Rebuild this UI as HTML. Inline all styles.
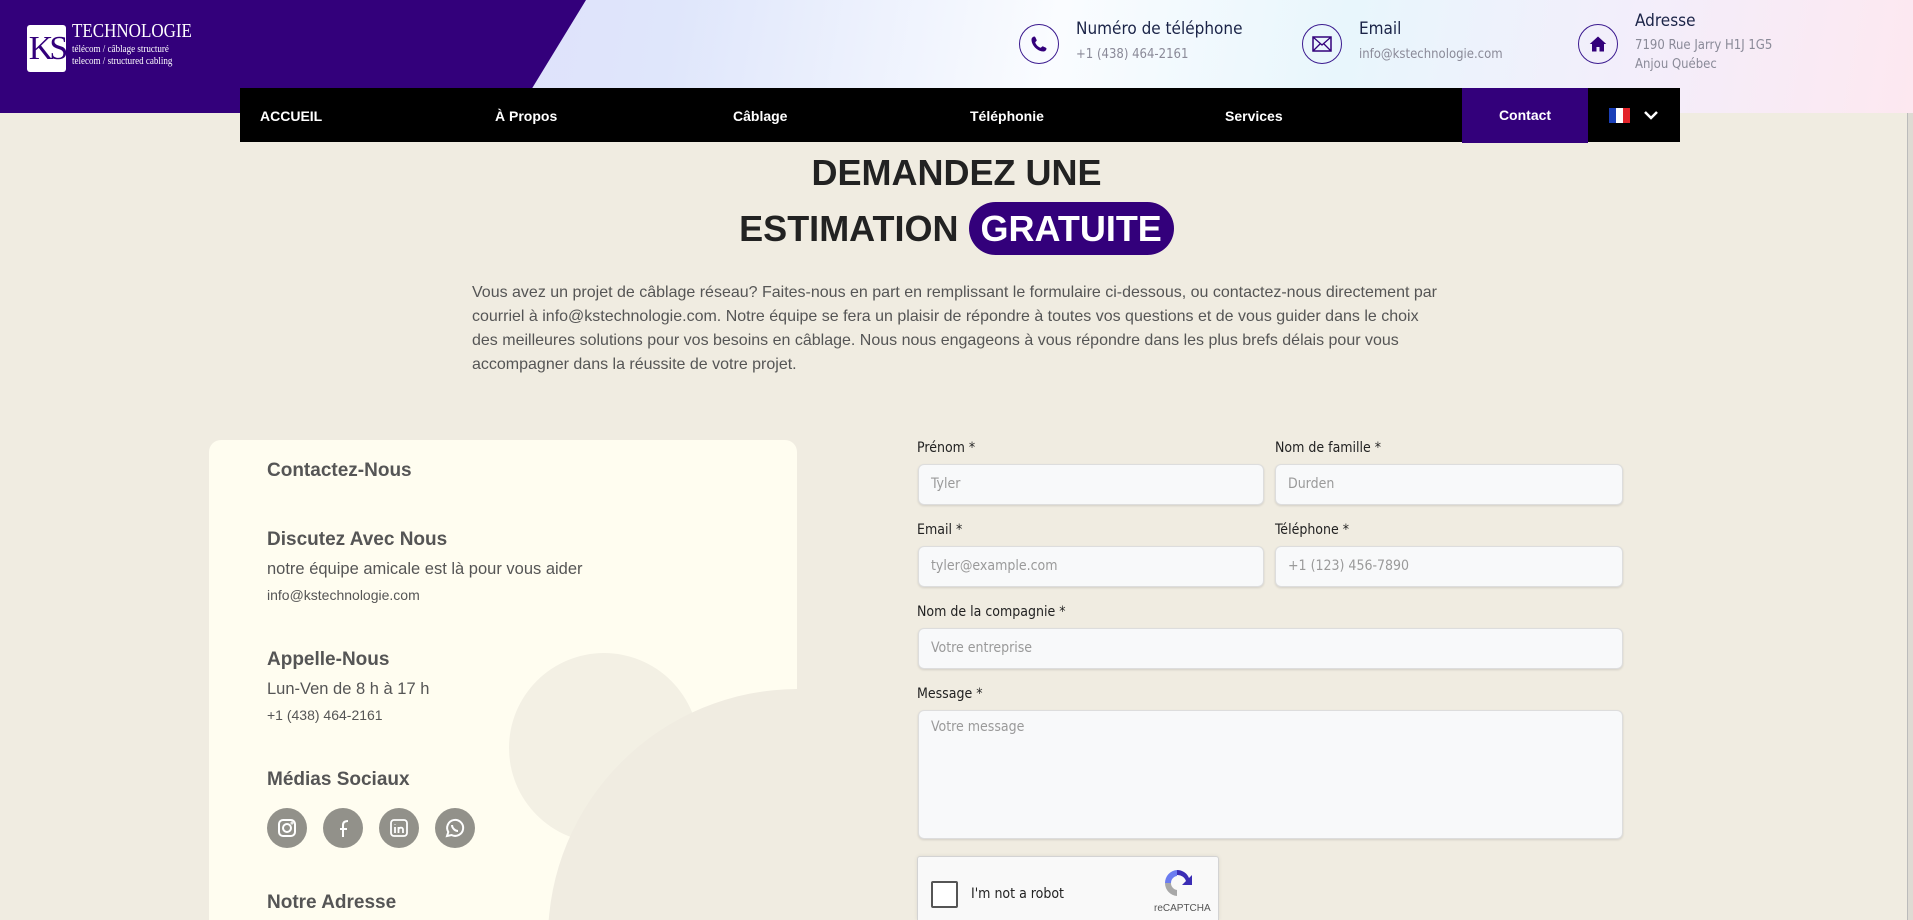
<!DOCTYPE html>
<html><head><meta charset="utf-8"><style>
*{box-sizing:border-box;margin:0;padding:0}
html,body{width:1913px;height:920px;overflow:hidden}
body{background:#f0ece1;font-family:"Liberation Sans",sans-serif;position:relative}
.abs{position:absolute}
#hdr{left:0;top:0;width:1913px;height:113px;background:linear-gradient(100deg,#ddd3fb 0%,#dfe6fb 35%,#fafcff 55%,#e8f6fc 70%,#f3eefb 85%,#fde8f0 100%)}
#purple{left:0;top:0;width:590px;height:113px;background:#33007b;clip-path:polygon(0 0,586px 0,517px 113px,0 113px)}
.ic{width:40px;height:40px;border:1.5px solid #3b1a8f;border-radius:50%;display:flex;align-items:center;justify-content:center}
.ht{font-size:17px;color:#1b2448;font-family:"DejaVu Sans Condensed","Liberation Sans",sans-serif}
.hs{font-size:13px;color:#8a8a98;font-family:"DejaVu Sans Condensed","Liberation Sans",sans-serif}
#nav{left:240px;top:88px;width:1440px;height:54px;background:#000}
.ni{position:absolute;top:1px;line-height:54px;color:#fff;font-weight:bold;font-size:14px}
h1{position:absolute;left:0;width:1913px;text-align:center;font-size:36px;font-weight:bold;color:#222}
.pill{display:inline-block;background:#33007b;color:#fff;border-radius:27px;padding:0 12px;line-height:53px}
#para{left:472px;top:281px;width:975px;font-size:16px;line-height:24px;color:#555}
#card{left:209px;top:440px;width:588px;height:480px;background:#fffdf0;border-radius:12px 12px 0 0;overflow:hidden}
.ct{position:absolute;left:58px;font-weight:bold;font-size:19px;color:#555}
.cs{position:absolute;left:58px;font-size:16.5px;color:#555}
.cx{position:absolute;left:58px;font-size:14px;color:#555}
.so{position:absolute;top:368px;width:40px;height:40px;border-radius:50%;background:#92918a;display:flex;align-items:center;justify-content:center}
.lb{position:absolute;font-size:14px;color:#222;font-family:"DejaVu Sans Condensed","Liberation Sans",sans-serif}
.in{position:absolute;background:#f8f9fa;border:1px solid #ddd;border-radius:6px;box-shadow:0 1px 2px rgba(0,0,0,.12);font-size:14px;color:#9a9a9a;padding-left:12px;font-family:"DejaVu Sans Condensed","Liberation Sans",sans-serif}
</style></head><body>
<div id="hdr" class="abs"></div>
<div id="purple" class="abs"></div>
<div class="abs" style="left:27px;top:25px;width:39px;height:47px;background:#fff;border-radius:3px;color:#33007b;font-family:'Liberation Serif',serif;font-size:34px;line-height:47px;text-align:center;letter-spacing:-4px">KS</div>
<div class="abs" style="left:72px;top:20px;color:#fff;font-family:'Liberation Serif',serif;font-size:20px;transform:scaleX(.85);transform-origin:left">TECHNOLOGIE</div>
<div class="abs" style="left:72px;top:43px;color:#fff;font-family:'Liberation Serif',serif;font-size:11px;line-height:12px;transform:scaleX(.82);transform-origin:left">télécom / câblage structuré<br>telecom / structured cabling</div>

<div class="abs ic" style="left:1019px;top:24px"><svg width="18" height="18" viewBox="0 0 24 24"><path d="M6 2c1 0 2 3 3 5 0 1-2 2-2 3 1 3 4 6 7 7 1 0 2-2 3-2 2 1 5 2 5 3 0 2-2 4-4 4C10 22 2 14 2 6c0-2 2-4 4-4z" fill="#33007b"/></svg></div>
<div class="abs ht" style="left:1076px;top:19px">Numéro de téléphone</div>
<div class="abs hs" style="left:1076px;top:47px">+1 (438) 464-2161</div>
<div class="abs ic" style="left:1302px;top:24px"><svg width="20" height="16" viewBox="0 0 20 16"><rect x="1" y="1" width="18" height="14" fill="none" stroke="#33007b" stroke-width="1.5"/><path d="M1 1l9 8 9-8M1 15l7-7M19 15l-7-7" fill="none" stroke="#33007b" stroke-width="1.3"/></svg></div>
<div class="abs ht" style="left:1359px;top:19px">Email</div>
<div class="abs hs" style="left:1359px;top:47px">info@kstechnologie.com</div>
<div class="abs ic" style="left:1578px;top:24px"><svg width="18" height="18" viewBox="0 0 24 24"><path d="M12 2L1 12h3v10h6v-6h4v6h6V12h3z" fill="#33007b"/></svg></div>
<div class="abs ht" style="left:1635px;top:11px">Adresse</div>
<div class="abs hs" style="left:1635px;top:36px;line-height:19px">7190 Rue Jarry H1J 1G5<br>Anjou Québec</div>

<div id="nav" class="abs">
<div class="ni" style="left:20px">ACCUEIL</div>
<div class="ni" style="left:255px">À Propos</div>
<div class="ni" style="left:493px">Câblage</div>
<div class="ni" style="left:730px">Téléphonie</div>
<div class="ni" style="left:985px">Services</div>
<div class="ni" style="left:1222px;width:126px;top:0;background:#33007b;text-align:center;line-height:55px">Contact</div>
<div class="abs" style="left:1369px;top:20px;width:21px;height:15px;background:linear-gradient(90deg,#1a3fb8 33%,#fff 33% 66%,#e3242b 66%)"></div>
<svg class="abs" style="left:1403px;top:20px" width="16" height="14" viewBox="0 0 16 14"><path d="M2 4l6 6 6-6" fill="none" stroke="#fff" stroke-width="2.5"/></svg>
</div>
<div class="abs" style="left:1907px;top:113px;width:6px;height:807px;background:#dedbd3;border-left:1px solid #bbb"></div>

<h1 style="top:152px">DEMANDEZ UNE</h1>
<h1 style="top:202px">ESTIMATION <span class="pill">GRATUITE</span></h1>
<div id="para" class="abs">Vous avez un projet de câblage réseau? Faites-nous en part en remplissant le formulaire ci-dessous, ou contactez-nous directement par courriel à info@kstechnologie.com. Notre équipe se fera un plaisir de répondre à toutes vos questions et de vous guider dans le choix des meilleures solutions pour vos besoins en câblage. Nous nous engageons à vous répondre dans les plus brefs délais pour vous accompagner dans la réussite de votre projet.</div>

<div id="card" class="abs">
<div class="abs" style="left:300px;top:213px;width:190px;height:190px;border-radius:50%;background:#f3f0e4"></div>
<div class="abs" style="left:339px;top:249px;width:500px;height:500px;border-radius:50%;background:#f0ece1"></div>
<div class="ct" style="top:20px">Contactez-Nous</div>
<div class="ct" style="top:89px">Discutez Avec Nous</div>
<div class="cs" style="top:120px">notre équipe amicale est là pour vous aider</div>
<div class="cx" style="top:147px">info@kstechnologie.com</div>
<div class="ct" style="top:209px">Appelle-Nous</div>
<div class="cs" style="top:240px">Lun-Ven de 8 h à 17 h</div>
<div class="cx" style="top:267px">+1 (438) 464-2161</div>
<div class="ct" style="top:329px">Médias Sociaux</div>
<div class="so" style="left:58px"><svg width="20" height="20" viewBox="0 0 20 20" fill="none" stroke="#fff" stroke-width="2"><rect x="2" y="2" width="16" height="16" rx="4"/><circle cx="10" cy="10" r="4"/><circle cx="15" cy="5" r=".5"/></svg></div>
<div class="so" style="left:114px"><svg width="20" height="20" viewBox="0 0 20 20" fill="none" stroke="#fff" stroke-width="2"><path d="M7 11h7M10 19V7c0-3 2-4 5-4"/></svg></div>
<div class="so" style="left:170px"><svg width="20" height="20" viewBox="0 0 20 20" fill="none" stroke="#fff" stroke-width="1.8"><rect x="2" y="2" width="16" height="16" rx="3"/><path d="M6 9v6M6 6v.5M9.5 15V9M9.5 11.5c0-2 4.5-3 4.5 0V15"/></svg></div>
<div class="so" style="left:226px"><svg width="22" height="22" viewBox="0 0 22 22" fill="none" stroke="#fff" stroke-width="2"><path d="M3 19l1.3-4A8 8 0 1 1 7.5 18z"/><path d="M8 8c0 3 3 6 6 6" stroke-width="2"/></svg></div>
<div class="ct" style="top:452px">Notre Adresse</div>
</div>

<div class="lb" style="left:917px;top:440px">Prénom *</div>
<div class="lb" style="left:1275px;top:440px">Nom de famille *</div>
<div class="in" style="left:918px;top:464px;width:346px;height:41px;line-height:39px">Tyler</div>
<div class="in" style="left:1275px;top:464px;width:348px;height:41px;line-height:39px">Durden</div>
<div class="lb" style="left:917px;top:522px">Email *</div>
<div class="lb" style="left:1275px;top:522px">Téléphone *</div>
<div class="in" style="left:918px;top:546px;width:346px;height:41px;line-height:39px">tyler@example.com</div>
<div class="in" style="left:1275px;top:546px;width:348px;height:41px;line-height:39px">+1 (123) 456-7890</div>
<div class="lb" style="left:917px;top:604px">Nom de la compagnie *</div>
<div class="in" style="left:918px;top:628px;width:705px;height:41px;line-height:39px">Votre entreprise</div>
<div class="lb" style="left:917px;top:686px">Message *</div>
<div class="in" style="left:918px;top:710px;width:705px;height:129px;padding-top:8px">Votre message</div>
<div class="abs" style="left:917px;top:856px;width:302px;height:64px;background:#f9f9f9;border:1px solid #d3d3d3;border-bottom:none;border-radius:3px 3px 0 0;box-shadow:0 0 4px rgba(0,0,0,.08)">
<div class="abs" style="left:13px;top:24px;width:27px;height:27px;border:2px solid #555;border-radius:2px;background:#fff"></div>
<div class="abs" style="left:53px;top:29px;font-size:14px;color:#222;font-family:'DejaVu Sans Condensed',sans-serif">I'm not a robot</div>
<svg class="abs" style="left:243px;top:10px" width="32" height="32" viewBox="0 0 32 32"><path d="M16 3a13 13 0 0 1 12 8l3-3v10H21l4-4a9 9 0 0 0-9-6z" fill="#3b2db5"/><path d="M16 3a13 13 0 0 0-12 13h6a7 7 0 0 1 6-7z" fill="#6b7cf0"/><path d="M4 16a13 13 0 0 0 12 13v-6a7 7 0 0 1-6-7z" fill="#a8a8a8"/></svg>
<div class="abs" style="left:236px;top:46px;font-size:10px;color:#555">reCAPTCHA</div>
</div>
</body></html>
